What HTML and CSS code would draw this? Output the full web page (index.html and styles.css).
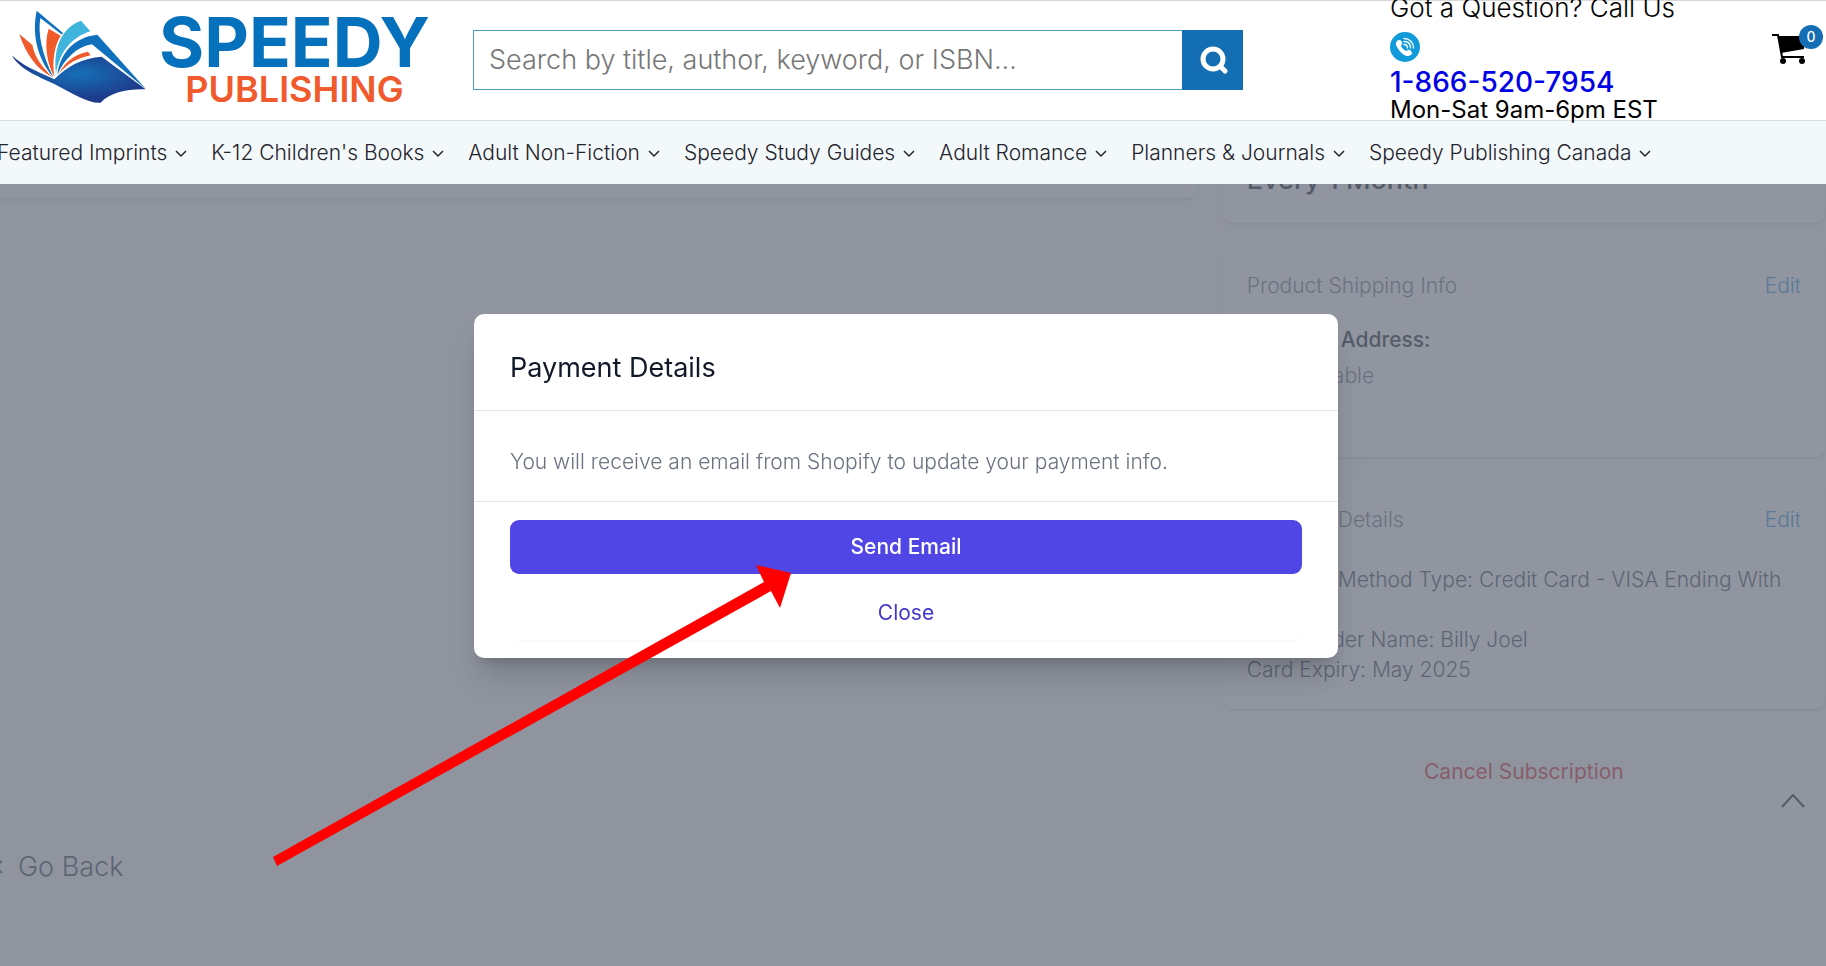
FILE: index.html
```
<!DOCTYPE html>
<html lang="en">
<head>
    <meta charset="utf-8">
    <meta name="viewport" content="width=device-width, initial-scale=1.0">
    <title>Speedy Publishing</title>
    <link rel="stylesheet" href="styles.css">
</head>

<body>
    <header>
        <div class="topbar">
            <a class="logo" href="#">
                <svg class="logo-book" viewBox="30 27 414 288" aria-hidden="true">
                    <defs>
                        <radialGradient id="cover" cx="0.5" cy="0.4" r="0.5">
                            <stop offset="0" stop-color="#1670b8" />
                            <stop offset="1" stop-color="#1d3d8c" />
                        </radialGradient>
                    </defs>
                    <path fill="#0f70bd" d="M110 32C98 90 104 165 160 232C125 160 113 100 121 54L184 103L190 100Z" />
                    <path fill="#f15a2b" d="M58 102L97 135C105 175 130 205 158 232C112 208 78 165 58 102Z" />
                    <path fill="#f15a2b" d="M146 86L182 107C162 140 157 180 163 230C140 190 132 130 146 86Z" />
                    <path fill="#3fb4dc" d="M243 62L271 94C220 110 180 150 168 220C160 150 180 85 243 62Z" />
                    <path fill="#0f70bd" d="M292 104L437 266L276 133C230 140 195 175 172 224C180 160 220 112 292 104Z" />
                    <path fill="#f15a2b" d="M264 155L272 166C230 174 202 192 176 222C193 188 222 163 264 155Z" />
                    <path fill="url(#cover)" d="M36 166C60 192 110 215 163 238C200 198 250 174 305 170L437 268C385 266 330 277 302 308C270 312 225 285 163 252C110 228 55 205 36 166Z" />
                </svg>
                <span class="logo-text">
                    <span class="logo-name">SPEEDY</span>
                    <span class="logo-sub">PUBLISHING</span>
                </span>
            </a>
            <form class="search">
                <input type="text" aria-label="Search" placeholder="Search by title, author, keyword, or ISBN...">
                <button type="button" aria-label="Search">
                    <svg width="30" height="30" viewBox="0 0 30 30" fill="none" stroke="#fff" stroke-linecap="round">
                        <circle cx="15" cy="14" r="10" stroke-width="5" />
                        <path stroke-width="5" d="M23 22L27 26" />
                    </svg>
                </button>
            </form>
            <div class="contact">
                <span class="question">Got a Question? Call Us</span>
                <svg width="30" height="30" viewBox="0 0 30 30" aria-hidden="true">
                    <circle cx="15" cy="15" r="15" fill="#129bdb" />
                    <path fill="#fff" d="M7 9C9 7 11 8 12 10C13 12 11 13 11 14C12 16 14 18 16 19C17 19 18 17 20 18C22 20 23 21 21 23C17 26 12 22 9 18C6 14 5 11 7 9Z" />
                    <path fill="none" stroke="#fff" stroke-width="1.3" stroke-linecap="round" d="M14 12.500C16 12.500 17.500 14 17.500 16M14 9.500C18 9.500 20.500 12 20.500 16M14 6.500C19.500 6.500 23.500 10.500 23.500 16" />
                </svg>
                <a href="tel:18665207954">1-866-520-7954</a>
                <span>Mon-Sat 9am-6pm EST</span>
            </div>
            <a class="cart" href="#" aria-label="Cart">
                <svg width="34" height="32" viewBox="0 0 34 32">
                    <path fill="none" stroke="#000" stroke-width="2" d="M0 2H6L10 24H32" />
                    <path d="M6 3H34L32 16L9 20Z" />
                    <circle cx="11" cy="28" r="3" />
                    <circle cx="30" cy="28" r="3" />
                </svg>
                <span class="cart-count">0</span>
            </a>
        </div>
        <nav>
            <a href="#">Featured Imprints <svg viewBox="0 0 12 8"><path d="M1 1L6 6L11 1" /></svg></a>
            <a href="#">K-12 Children's Books <svg viewBox="0 0 12 8"><path d="M1 1L6 6L11 1" /></svg></a>
            <a href="#">Adult Non-Fiction <svg viewBox="0 0 12 8"><path d="M1 1L6 6L11 1" /></svg></a>
            <a href="#">Speedy Study Guides <svg viewBox="0 0 12 8"><path d="M1 1L6 6L11 1" /></svg></a>
            <a href="#">Adult Romance <svg viewBox="0 0 12 8"><path d="M1 1L6 6L11 1" /></svg></a>
            <a href="#">Planners &amp; Journals <svg viewBox="0 0 12 8"><path d="M1 1L6 6L11 1" /></svg></a>
            <a href="#">Speedy Publishing Canada <svg viewBox="0 0 12 8"><path d="M1 1L6 6L11 1" /></svg></a>
        </nav>
    </header>

    <main>
        <section class="orders">
            <div class="card card-order"></div>
            <a class="go-back" href="#">
                <svg width="10" height="14" viewBox="0 0 10 14"><path d="M9 1L2 7L9 13" /></svg>
                Go Back
            </a>
        </section>
        <aside>
            <div class="card card-frequency">
                <h2>Every 1 Month</h2>
            </div>
            <div class="card card-shipping">
                <div class="card-title">
                    <span>Product Shipping Info</span>
                    <a href="#">Edit</a>
                </div>
                <h3>Shipping Address:</h3>
                <p class="muted">Not Available</p>
            </div>
            <div class="card card-payment">
                <div class="card-title">
                    <span>Payment Details</span>
                    <a href="#">Edit</a>
                </div>
                <p>Payment Method Type: Credit Card - VISA Ending With 4242</p>
                <p>Card Holder Name: Billy Joel</p>
                <p>Card Expiry: May 2025</p>
            </div>
            <button class="cancel" type="button">Cancel Subscription</button>
        </aside>
        <button class="to-top" type="button" aria-label="Back to top">
            <svg width="24" height="14" viewBox="0 0 24 14"><path d="M1 13L12 1L23 13" /></svg>
        </button>
    </main>

    <div class="modal">
        <div class="modal-content" role="dialog" aria-labelledby="modal-name">
            <h3 class="modal-name" id="modal-name">Payment Details</h3>
            <p class="modal-description">You will receive an email from Shopify to update your payment info.</p>
            <div class="modal-buttons">
                <button class="send" type="button">Send Email</button>
                <button class="close" type="button">Close</button>
            </div>
            <svg class="arrow" width="520" height="304" viewBox="0 0 520 304" aria-hidden="true">
                <path fill="#f00" d="M0 294L491 19L483 2L518 10L507 45L498 28L4 303Z" />
            </svg>
        </div>
    </div>
</body>
</html>
```
FILE: styles.css
```
* {
    box-sizing: border-box;
}

body {
    margin: 0;
    min-height: 100vh;
    display: flex;
    flex-direction: column;
    background-color: #f9fafb;
    font-family: Inter, sans-serif;
    font-size: 21px;
    font-weight: 300;
    line-height: 30px;
    color: #374151;
    overflow: hidden;
}

h2,
h3,
p {
    margin: 0;
}

a {
    text-decoration: none;
}

button {
    border: 0;
    padding: 0;
    background: none;
    font: inherit;
    cursor: pointer;
}

header {
    position: relative;
    z-index: 2;
    background-color: #f3f8fa;
}

/* logo, search, phone and cart */
.topbar {
    position: relative;
    display: flex;
    align-items: center;
    height: 121px;
    border-top: 1px solid #d8d8d8;
    border-bottom: 1px solid #d8dfe0;
    background-color: #fff;
}

.logo {
    display: flex;
    flex: 0 0 473px;
    align-items: flex-start;
    gap: 11px;
    padding-left: 10px;
    height: 104px;
}

.logo-book {
    width: 138px;
    height: 96px;
}

.logo-text {
    display: flex;
    flex-direction: column;
    align-items: center;
}

.logo-name {
    font-size: 69px;
    font-weight: 700;
    line-height: 66px;
    color: #0571bd;
}

.logo-sub {
    font-size: 36px;
    font-weight: 600;
    line-height: 28px;
    color: #f05a2c;
}

.search {
    display: flex;
    flex: 0 1 770px;
    height: 60px;
    margin-bottom: 2px;
}

.search input {
    flex: 1;
    min-width: 0;
    padding: 0 15px;
    border: 1px solid #4d9cc5;
    border-right: 0;
    background-color: #fff;
    font: inherit;
    font-size: 27px;
}

.search input::placeholder {
    color: #777;
    opacity: 1;
}

.search button {
    display: flex;
    align-items: center;
    justify-content: center;
    width: 61px;
    background-color: #146eb4;
}

.contact {
    display: flex;
    flex-direction: column;
    margin-left: 147px;
    margin-bottom: 4px;
    font-size: 24px;
    font-weight: 400;
    line-height: 28px;
    color: #000;
    white-space: nowrap;
}

.contact .question {
    margin-bottom: 10px;
    font-size: 26px;
    font-weight: 300;
}

.contact svg {
    margin-bottom: 6px;
}

.contact a {
    font-size: 28px;
    font-weight: 500;
    color: #0000e6;
}

.cart {
    position: relative;
    margin-left: auto;
    margin-right: 20px;
    height: 56px;
}

.cart-count {
    position: absolute;
    top: -8px;
    right: -17px;
    width: 24px;
    height: 24px;
    border-radius: 50%;
    background-color: #146eb4;
    color: #fff;
    font-size: 14px;
    font-weight: 500;
    line-height: 24px;
    text-align: center;
}

nav {
    display: flex;
    gap: 24px;
    height: 63px;
    align-items: center;
    margin-left: -3px;
    white-space: nowrap;
}

nav a {
    color: #24242c;
}

nav svg {
    width: 12px;
    height: 8px;
    margin-left: 2px;
    vertical-align: 2px;
    fill: none;
    stroke: #24242c;
    stroke-width: 1.5;
}

/* subscription page */
main {
    display: flex;
    flex: 1;
    gap: 26px;
    padding-right: 1px;
    overflow: hidden;
}

.card {
    background-color: #fff;
    border-radius: 10px;
    box-shadow: 0 2px 3px rgba(0, 0, 0, .12);
}

.orders {
    flex: 1;
}

.card-order {
    height: 14px;
    border-radius: 0 0 10px 0;
}

.go-back {
    display: flex;
    align-items: center;
    gap: 15px;
    margin-top: 654px;
    margin-left: -7px;
    font-size: 27px;
    color: #374151;
}

.go-back svg {
    fill: none;
    stroke: #374151;
    stroke-width: 2;
}

aside {
    flex: 0 0 33%;
    display: flex;
    flex-direction: column;
    gap: 24px;
    margin-top: -19px;
}

aside .card {
    padding: 24px;
}

aside .card-frequency {
    padding: 0 24px 28px;
}

h2 {
    font-size: 27px;
    font-weight: 500;
    color: #111827;
}

.card-shipping {
    height: 210px;
}

.card-title {
    display: flex;
    justify-content: space-between;
    margin-bottom: 24px;
    color: #6b7280;
}

.card-title a {
    color: #2693e0;
}

h3 {
    font-size: 21px;
    font-weight: 500;
    color: #111827;
}

.muted {
    margin-top: 6px;
    color: #6b7280;
}

.card-payment .card-title {
    margin-bottom: 30px;
}

.cancel {
    margin-top: 24px;
    color: #dc2626;
    font-weight: 400;
}

.to-top {
    position: absolute;
    right: 6px;
    bottom: 138px;
    width: 54px;
    height: 54px;
    border-radius: 50%;
    background-color: #fff;
}

.to-top svg {
    fill: none;
    stroke: #111827;
    stroke-width: 2;
}

/* dialog over the page, under the header */
.modal {
    position: fixed;
    z-index: 1;
    inset: 0;
    display: flex;
    align-items: center;
    justify-content: center;
    padding: 6px 14px 0 0;
    background-color: rgba(107, 114, 128, .75);
}

.modal-content {
    position: relative;
    width: 864px;
    border-radius: 10px;
    background-color: #fff;
    box-shadow: 0 24px 32px -6px rgba(0, 0, 0, .15), 0 10px 12px -6px rgba(0, 0, 0, .15);
}

.modal-name {
    padding: 36px 36px 24px;
    border-bottom: 1px solid #e5e7eb;
    font-size: 27px;
    font-weight: 400;
    line-height: 36px;
}

.modal-description {
    padding: 36px 36px 24px;
    border-bottom: 1px solid #e5e7eb;
    color: #6b7280;
}

.modal-buttons {
    display: flex;
    flex-direction: column;
    gap: 12px;
    padding: 18px 36px;
}

.modal-buttons button {
    height: 54px;
    border-radius: 9px;
}

.send {
    background-color: #4f46e5;
    color: #fff;
    font-weight: 500;
}

.close {
    box-shadow: 0 1px 3px rgba(0, 0, 0, .03);
    color: #4338ca;
    font-weight: 400;
}

.arrow {
    position: absolute;
    left: -201px;
    top: 249px;
    pointer-events: none;
}
```
